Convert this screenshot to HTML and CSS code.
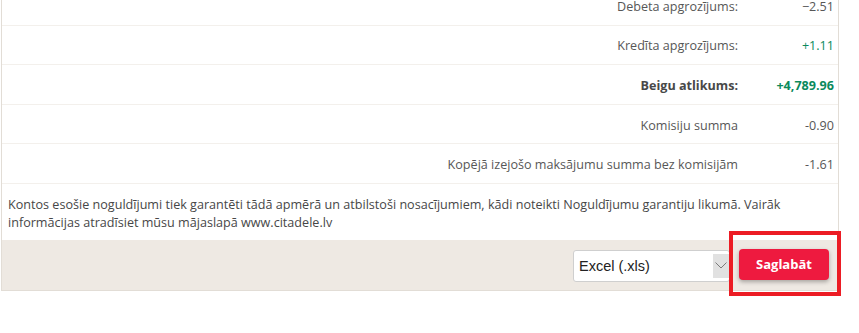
FILE: index.html
```html
<!DOCTYPE html>
<html lang="lv">
<head>
<meta charset="utf-8">
<title>Konta izraksts</title>
<link rel="stylesheet" href="styles.css">
</head>
<body>
<div class="panel">
  <div class="row"><div class="label">Debeta apgrozījums:</div><div class="value">−2.51</div></div>
  <div class="row"><div class="label">Kredīta apgrozījums:</div><div class="value pos">+1.11</div></div>
  <div class="row strong"><div class="label">Beigu atlikums:</div><div class="value pos">+4,789.96</div></div>
  <div class="row"><div class="label">Komisiju summa</div><div class="value">-0.90</div></div>
  <div class="row"><div class="label">Kopējā izejošo maksājumu summa bez komisijām</div><div class="value">-1.61</div></div>
  <div class="note">Kontos esošie noguldījumi tiek garantēti tādā apmērā un atbilstoši nosacījumiem, kādi noteikti Noguldījumu garantiju likumā. Vairāk informācijas atradīsiet mūsu mājaslapā www.citadele.lv</div>
  <div class="footer">
    <div class="select-wrap">
      <select class="select"><option>Excel (.xls)</option></select>
      <span class="arrow"><svg width="12" height="7" viewBox="0 0 12 7"><path d="M0.5 0.5 L6 6 L11.5 0.5" fill="none" stroke="#7a7a7a" stroke-width="1"/></svg></span>
    </div>
    <button class="btn">Saglabāt</button>
  </div>
</div>
<div class="highlight"></div>
</body>
</html>
```
FILE: styles.css
```css
* { box-sizing: border-box; }
body {
  margin: 0;
  background: #fff;
  font-family: "Open Sans", "Liberation Sans", sans-serif;
  font-size: 12.6px;
  color: #575757;
}
.panel {
  margin-left: 1px;
  margin-top: -14px;
  width: 838px;
  border-left: 1px solid #e2ddd6;
  border-right: 1px solid #e2ddd6;
}
.row {
  display: grid;
  grid-template-columns: 1fr 100px;
  align-items: center;
  height: 39.6px;
  padding-top: 2px;
  border-bottom: 1px solid #f3f0ec;
}
.label { text-align: right; }
.value { text-align: right; padding-right: 4px; }
.pos { color: #0b8a5c; }
.strong { font-weight: 700; }
.strong .label { color: #484848; }
.note {
  padding: 12px 6px 8px 6px;
  line-height: 18px;
  color: #474747;
}
.footer {
  display: flex;
  justify-content: flex-end;
  align-items: center;
  gap: 9px;
  height: 51px;
  padding-right: 9px;
  background: #eee9e3;
  border-bottom: 1px solid #e2ddd6;
}
.select-wrap {
  position: relative;
  width: 157px;
  height: 32px;
  margin-top: 2px;
}
.select {
  appearance: none;
  -webkit-appearance: none;
  width: 100%;
  height: 100%;
  border: 1px solid #cfcfcf;
  border-radius: 3px;
  background: #fff;
  padding: 0 0 0 5px;
  font-family: "Liberation Sans", Arial, sans-serif;
  font-size: 14.5px;
  color: #222;
}
.arrow {
  position: absolute;
  right: 1px;
  top: 4px;
  width: 16px;
  height: 24px;
  background: #e1e1e1;
  display: flex;
  align-items: center;
  justify-content: center;
  pointer-events: none;
}
.btn {
  width: 90px;
  height: 31px;
  border: none;
  border-radius: 4px;
  background: #ee1a3f;
  color: #fff;
  font-family: "Open Sans", "Liberation Sans", sans-serif;
  font-size: 13px;
  font-weight: 700;
  box-shadow: 0 2px 4px rgba(0, 0, 0, 0.3);
  margin-top: -1px;
}
.highlight {
  position: absolute;
  left: 729px;
  top: 231px;
  width: 112px;
  height: 65px;
  border: 4px solid #ec1c24;
  pointer-events: none;
}
```
